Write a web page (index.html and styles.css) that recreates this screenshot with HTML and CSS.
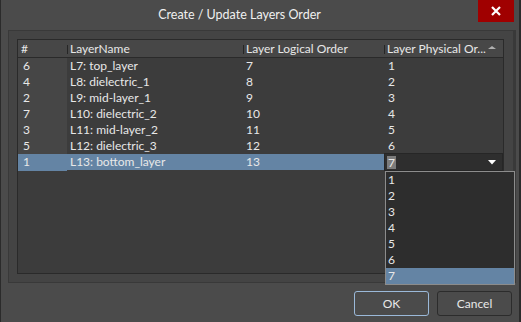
FILE: index.html
```html
<!DOCTYPE html>
<html lang="en">
<head>
    <meta charset="UTF-8">
    <title>Create / Update Layers Order</title>
    <link rel="stylesheet" href="styles.css">
</head>
<body>

    <div class="window">

        <!-- Title bar -->
        <div class="titlebar">
            <div class="title">Create / Update Layers Order</div>
            <button class="close">
                <svg width="10" height="10" viewBox="0 0 10 10">
                    <path d="M1 1 L9 9 M9 1 L1 9" stroke="#fff" stroke-width="2.2"/>
                </svg>
            </button>
        </div>

        <!-- Layers grid -->
        <div class="panel">
            <div class="grid">
                <div class="row head">
                    <div class="cell">#</div>
                    <div class="cell sep">LayerName</div>
                    <div class="cell sep">Layer Logical Order</div>
                    <div class="cell sep sorted">Layer Physical Or...<span class="sort-up"></span></div>
                </div>
                <div class="row">
                    <div class="cell num">6</div>
                    <div class="cell">L7: top_layer</div>
                    <div class="cell">7</div>
                    <div class="cell">1</div>
                </div>
                <div class="row">
                    <div class="cell num">4</div>
                    <div class="cell">L8: dielectric_1</div>
                    <div class="cell">8</div>
                    <div class="cell">2</div>
                </div>
                <div class="row">
                    <div class="cell num">2</div>
                    <div class="cell">L9: mid-layer_1</div>
                    <div class="cell">9</div>
                    <div class="cell">3</div>
                </div>
                <div class="row">
                    <div class="cell num">7</div>
                    <div class="cell">L10: dielectric_2</div>
                    <div class="cell">10</div>
                    <div class="cell">4</div>
                </div>
                <div class="row">
                    <div class="cell num">3</div>
                    <div class="cell">L11: mid-layer_2</div>
                    <div class="cell">11</div>
                    <div class="cell">5</div>
                </div>
                <div class="row">
                    <div class="cell num">5</div>
                    <div class="cell">L12: dielectric_3</div>
                    <div class="cell">12</div>
                    <div class="cell">6</div>
                </div>
                <div class="row selected">
                    <div class="cell num">1</div>
                    <div class="cell">L13: bottom_layer</div>
                    <div class="cell">13</div>
                    <div class="cell combo">
                        <span class="combo-text">7</span>
                        <svg class="combo-arrow" width="8" height="5" viewBox="0 0 8 5">
                            <path d="M0 0 H8 L4 4.5 Z" fill="#fff"/>
                        </svg>
                        <ul class="dropdown">
                            <li>1</li>
                            <li>2</li>
                            <li>3</li>
                            <li>4</li>
                            <li>5</li>
                            <li>6</li>
                            <li class="active">7</li>
                        </ul>
                    </div>
                </div>
            </div>
        </div>

        <!-- Buttons -->
        <div class="footer">
            <button class="btn default">OK</button>
            <button class="btn">Cancel</button>
        </div>

    </div>

</body>
</html>
```

FILE: styles.css
```css
body {
    margin: 0;
    padding: 0;
    background-color: #4b4b4b;
    font-family: 'Lato', sans-serif;
    font-size: 12px;
    color: #e8e8e8;
}
.window {
    width: 521px;
    height: 322px;
    box-sizing: border-box;
    background-color: #4b4b4b;
    border-left: 1px solid #2b2b2b;
    border-right: 2px solid #2b2b2b;
}
.titlebar {
    display: flex;
    height: 30px;
}
.title {
    flex: 1;
    text-align: center;
    font-size: 12.5px;
    line-height: 29px;
    color: #f0f0f0;
}
.close {
    width: 36px;
    height: 22px;
    margin-right: 5px;
    padding: 0;
    border: none;
    background-color: #a00000;
    display: flex;
    align-items: center;
    justify-content: center;
}
.panel {
    width: 508px;
    margin-left: 7px;
    padding: 8px;
    box-sizing: border-box;
    background-color: #444444;
    border: 1px solid #393939;
    border-right-width: 3px;
}
.grid {
    width: 487px;
    height: 235px;
    box-sizing: border-box;
    background-color: #3c3c3c;
    border: 1px solid #2a2a2a;
}
.row {
    display: grid;
    grid-template-columns: 49px 176px 141px 119px;
    height: 16px;
    line-height: 16px;
}
.row.head {
    height: 17px;
    line-height: 17px;
    background-color: #474747;
    border-bottom: 1px solid #2a2a2a;
}
.cell {
    padding-left: 3px;
    white-space: nowrap;
    overflow: hidden;
}
.cell.num {
    padding-left: 5px;
    background-color: #464646;
}
.row:not(.head) .cell:nth-child(4) {
    padding-left: 4px;
}
.head .cell.sep {
    position: relative;
}
.head .cell.sep::before {
    content: "";
    position: absolute;
    left: 0;
    top: 5px;
    height: 9px;
    border-left: 1px solid #262626;
}
.head .sorted {
    display: flex;
    align-items: center;
    justify-content: space-between;
    padding-right: 7px;
    overflow: visible;
}
.sort-up {
    width: 0;
    height: 0;
    border-left: 4px solid transparent;
    border-right: 4px solid transparent;
    border-bottom: 3px solid #b0b0b0;
    margin-top: -2px;
}
.row.selected {
    background-color: #6484a4;
}
.row.selected .cell.num {
    background-color: #6484a4;
}
.row.selected .cell.combo {
    position: relative;
    overflow: visible;
    background-color: #2e2e2e;
    border: 1px solid #262626;
    height: 16px;
    margin-top: -1px;
    padding-left: 2px;
    display: flex;
    align-items: center;
    justify-content: space-between;
    padding-right: 6px;
}
.combo-text {
    background-color: #7c7c7c;
    line-height: 13px;
    padding: 0 1px;
}
.dropdown {
    position: absolute;
    left: 0;
    top: 17px;
    width: 130px;
    margin: 0;
    padding: 0;
    list-style: none;
    box-sizing: border-box;
    background-color: #2d2d2d;
    border: 1px solid #8c8c8c;
    z-index: 2;
}
.dropdown li {
    height: 16px;
    line-height: 16px;
    padding-left: 2px;
}
.dropdown li.active {
    background-color: #6484a4;
}
.footer {
    display: flex;
    justify-content: flex-end;
    gap: 8px;
    padding: 8px 7px 0 0;
}
.btn {
    width: 75px;
    height: 25px;
    background-color: #4b4b4b;
    color: #e8e8e8;
    border: 1px solid #2c2c2c;
    border-radius: 3px;
    font-family: 'Lato', sans-serif;
    font-size: 12px;
}
.btn.default {
    border-color: #9bb9d9;
}
```
